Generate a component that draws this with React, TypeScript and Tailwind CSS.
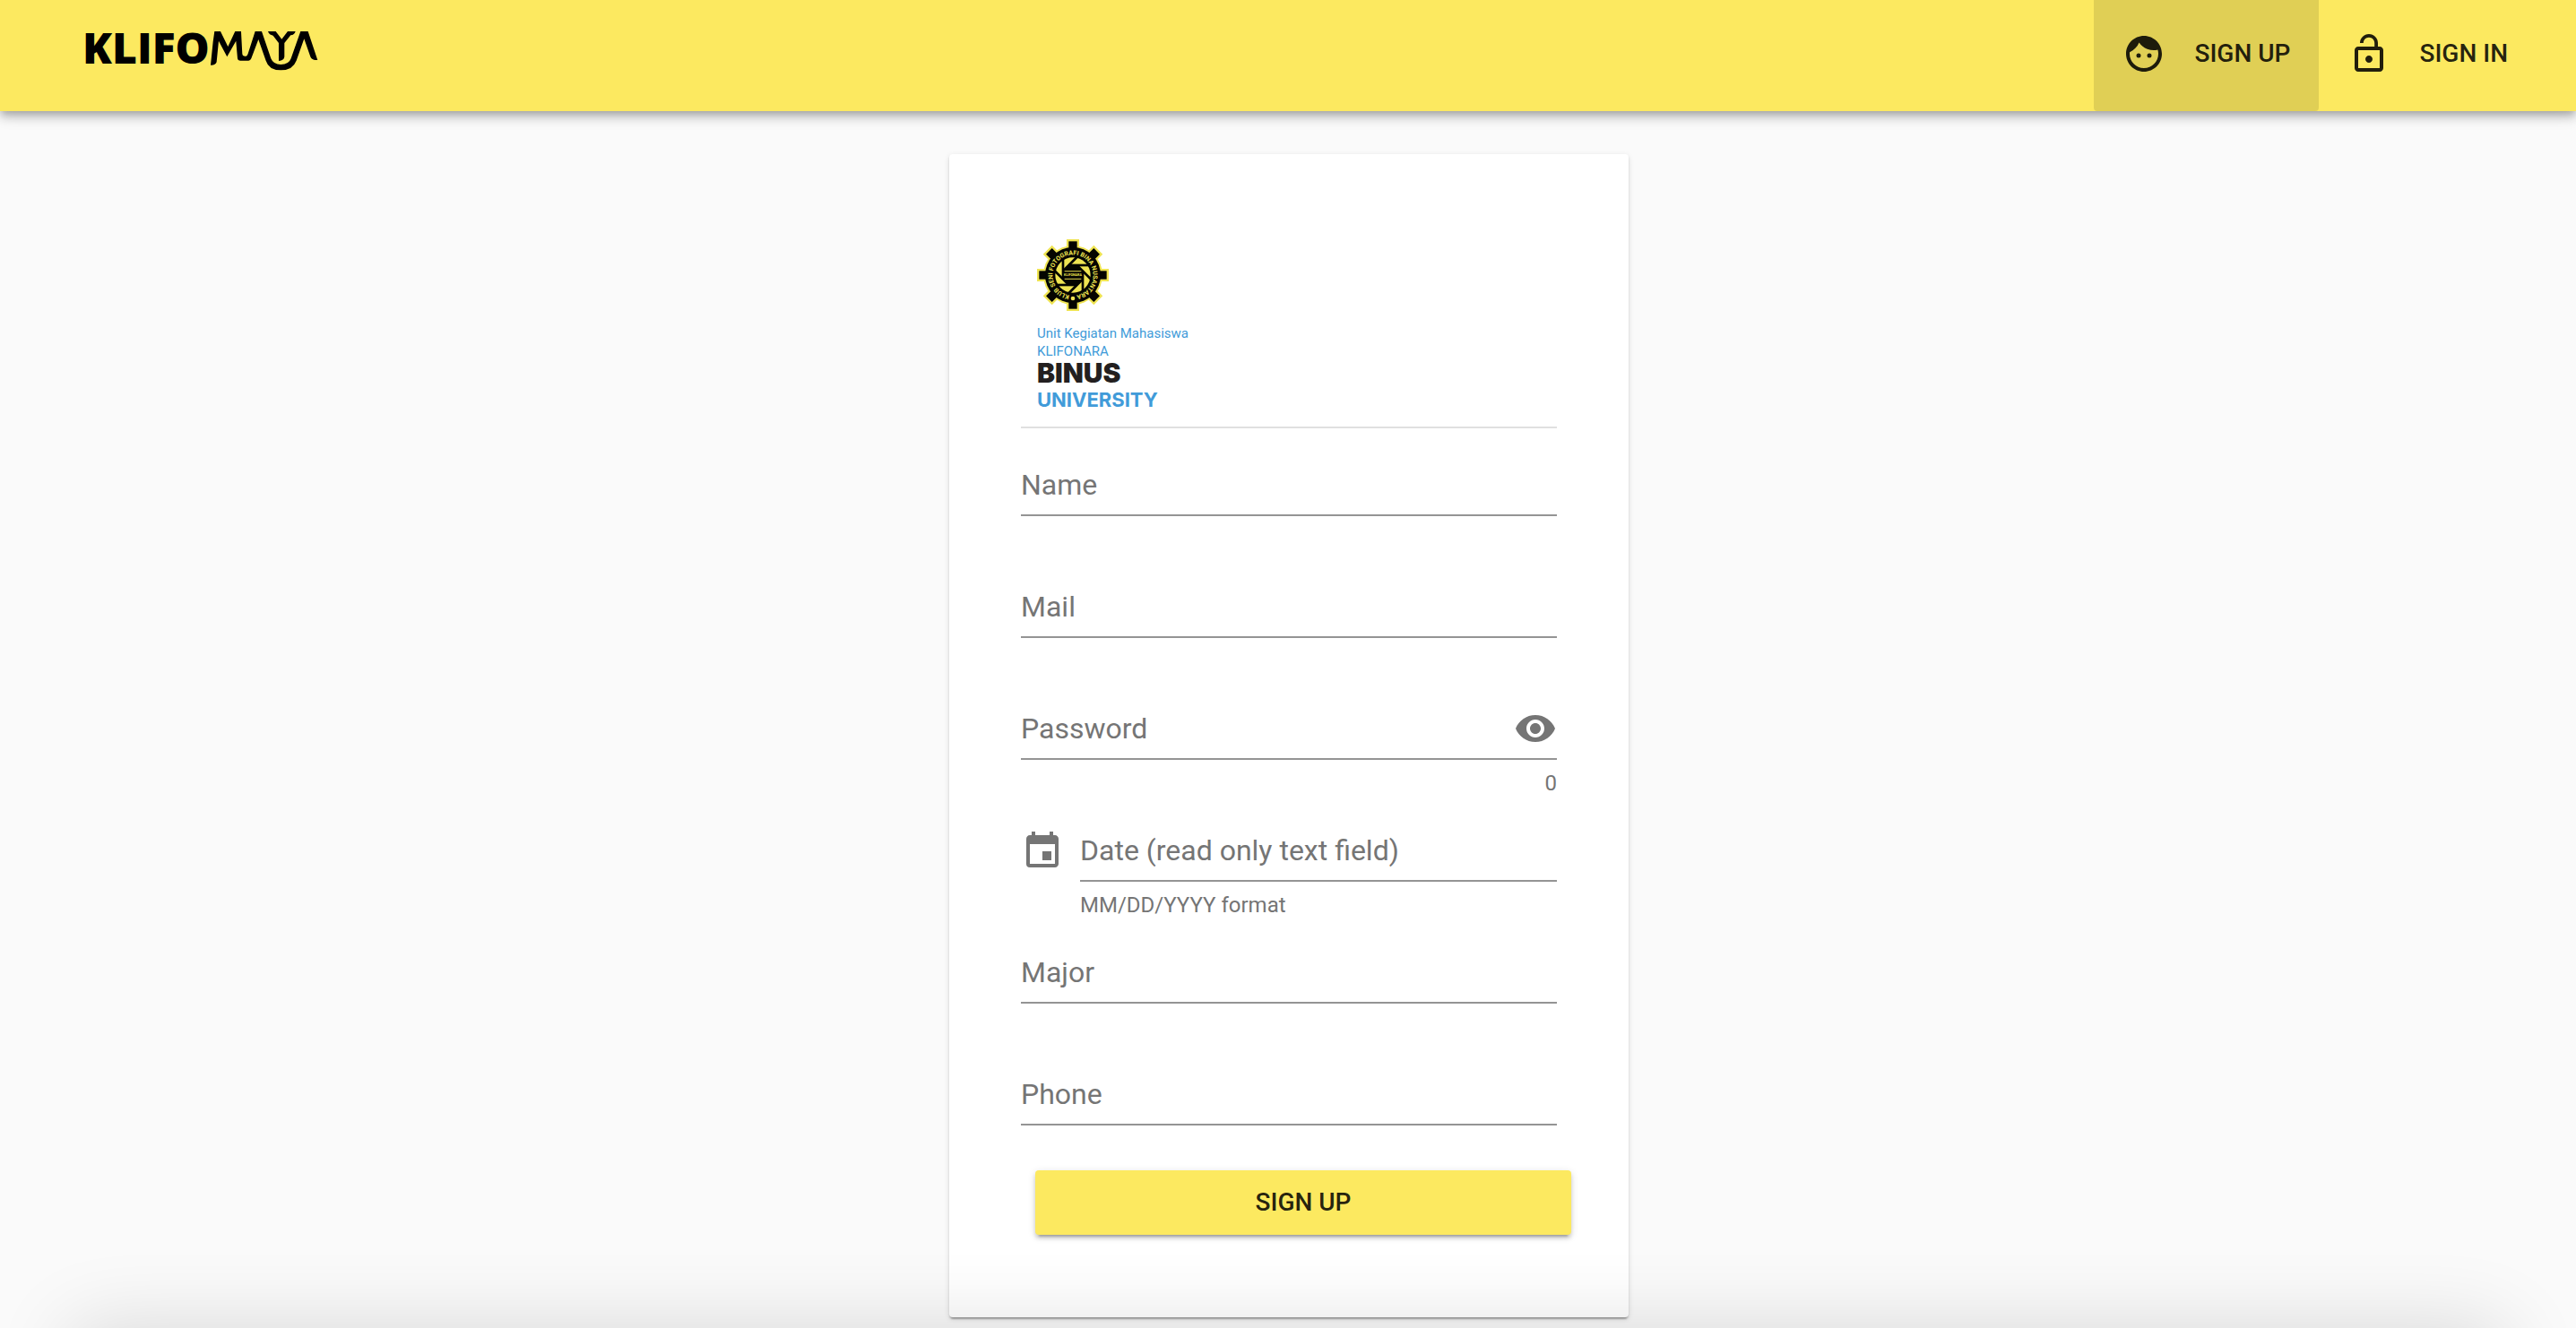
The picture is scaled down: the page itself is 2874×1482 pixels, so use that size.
import { useState, type ReactNode } from "react";
import { MdEvent, MdFace, MdLockOpen, MdVisibility, MdVisibilityOff } from "react-icons/md";

const SPOKES = [0, 45, 90, 135, 180, 225, 270, 315];

function Wordmark() {
  return (
    <svg viewBox="0 -20 272 77" className="h-[77px] w-[272px]" role="img" aria-label="Klifomaya">
      <text x="0" y="37" className="font-['Open_Sans',sans-serif] text-[48px] font-extrabold">
        KLIFO
      </text>
      <g transform="translate(-31 -34) scale(0.3333)">
        <path d="M535 105H555L580 156L604 105H624L628 180Q629 188 637 188H641Q645 187 647 180L671 105H693L724 196Q732 216 757 216Q784 216 791 196L823 105H848L880 201H871Q860 200 856 190L835 130L809 203Q797 235 757 235Q717 235 707 203L682 132L658 196Q655 203 649 203H622Q613 203 612 195L607 137L577 190L549 137L542 208Q538 219 522 218L530 140Z" />
        <path d="M714 105H740L760 131L780 105H806Q803 117 790 118L769 144V190Q768 203 750 204V144L731 119Q718 117 714 105Z" />
      </g>
    </svg>
  );
}

function GearEmblem() {
  return (
    <svg viewBox="-120 -120 240 240" className="size-20" role="img" aria-label="Klub Seni Fotografi Bina Nusantara">
      <defs>
        <path id="ring" d="M0 68A68 68 0 0 1 0 -68A68 68 0 0 1 0 68" />
      </defs>
      <g fill="#efe452">
        {SPOKES.map((a) => (
          <rect key={a} x="-21" y="-120" width="42" height="50" transform={`rotate(${a})`} />
        ))}
        <circle r="99" />
      </g>
      <g fill="#050500">
        {SPOKES.map((a) => (
          <rect key={a} x="-14" y="-113" width="28" height="50" transform={`rotate(${a})`} />
        ))}
        <circle r="93" />
      </g>
      <circle r="59" fill="#efe452" />
      <g fill="none" stroke="#050500" strokeWidth="8">
        {SPOKES.map((a) => (
          <path key={a} d="M-14 -33H54" transform={`rotate(${a})`} />
        ))}
      </g>
      <path d="M-14 -34H14L34 -14V14L14 34H-14L-34 14V-14Z" fill="#050500" />
      <path d="M-28 -13H28M-28 13H28" stroke="#b5ad3e" strokeWidth="4" />
      <text y="4" textAnchor="middle" fill="#efe452" className="font-['Roboto',sans-serif] text-[11px] font-bold">
        KLIFONARA
      </text>
      <circle cy="78" r="7" fill="#efe452" />
      <text fill="#efe452" className="font-['Roboto',sans-serif] text-[21px] font-bold">
        <textPath href="#ring" startOffset="50%" textAnchor="middle">
          KLUB SENI FOTOGRAFI BINA NUSANTARA
        </textPath>
      </text>
    </svg>
  );
}

function BinusLogo() {
  return (
    <div className="flex flex-col items-start pl-[18px]">
      <GearEmblem />
      <p className="mt-[15px] text-[15px] leading-5 text-[#419bd9]">
        Unit Kegiatan Mahasiswa
        <br />
        KLIFONARA
      </p>
      <p className="font-['Inter',sans-serif] text-[30px] leading-7 font-black text-[#231f20]">BINUS</p>
      <p className="font-['Inter',sans-serif] text-[22px] leading-8 font-bold text-[#419bd9]">UNIVERSITY</p>
    </div>
  );
}

type FieldProps = {
  id: string;
  label: string;
  type?: string;
  readOnly?: boolean;
  prepend?: ReactNode;
  append?: ReactNode;
  hint?: string;
  counter?: boolean;
};

function Field({ id, label, type = "text", readOnly, prepend, append, hint, counter }: FieldProps) {
  const [value, setValue] = useState("");
  return (
    <div className="flex gap-[18px]">
      {prepend}
      <div className="min-w-0 flex-1">
        <div className="relative flex h-[68px] items-center border-b-2 border-[#949494] focus-within:border-black">
          <input
            id={id}
            type={type}
            value={value}
            readOnly={readOnly}
            onChange={(e) => setValue(e.target.value)}
            className="h-full min-w-0 flex-1 bg-transparent text-[32px] text-black/87 outline-none"
          />
          {value === "" && (
            <label htmlFor={id} className="pointer-events-none absolute inset-y-0 left-0 flex items-center text-[32px]">
              {label}
            </label>
          )}
          {append}
        </div>
        <div className="flex h-[68px] justify-between pt-[14px] text-2xl leading-6">
          <span>{hint}</span>
          {counter && <span>{value.length}</span>}
        </div>
      </div>
    </div>
  );
}

export default function App() {
  const [visible, setVisible] = useState(false);
  return (
    <div className="min-h-screen bg-[#fafafa] font-['Roboto',sans-serif] text-[#757575]">
      <header className="relative flex h-[124px] items-stretch justify-between bg-[#fce960] pr-11 pl-[92px] text-black/87 shadow-[0_4px_8px_-2px_rgba(0,0,0,0.2),0_8px_10px_rgba(0,0,0,0.14),0_2px_20px_rgba(0,0,0,0.12)]">
        <a href="#home" className="self-start pt-[14px] text-black">
          <Wordmark />
        </a>
        <nav className="flex text-[28px] font-medium">
          <a href="#signup" aria-current="page" className="flex items-center gap-8 rounded-b bg-black/11 px-8 pb-1">
            <MdFace className="size-12" />
            SIGN UP
          </a>
          <a href="#signin" className="flex items-center gap-8 px-8 pb-1">
            <MdLockOpen className="size-12" />
            SIGN IN
          </a>
        </nav>
      </header>

      <main className="pt-12 pr-6 pb-3 pl-[26px]">
        <form
          onSubmit={(e) => e.preventDefault()}
          className="mx-auto max-w-[758px] rounded bg-white px-20 pt-[95px] pb-[92px] shadow-[0_4px_2px_-2px_rgba(0,0,0,0.2),0_2px_2px_rgba(0,0,0,0.14),0_2px_6px_rgba(0,0,0,0.12)]"
        >
          <BinusLogo />
          <hr className="mt-[14px] mb-[30px] border-t-2 border-[#e0e0e0]" />
          <Field id="name" label="Name" />
          <Field id="mail" label="Mail" type="email" />
          <Field
            id="password"
            label="Password"
            type={visible ? "text" : "password"}
            counter
            append={
              <button type="button" aria-label="Toggle password visibility" onClick={() => setVisible(!visible)}>
                {visible ? <MdVisibilityOff className="size-12" /> : <MdVisibility className="size-12" />}
              </button>
            }
          />
          <Field
            id="date"
            label="Date (read only text field)"
            readOnly
            hint="MM/DD/YYYY format"
            prepend={<MdEvent className="mt-[10px] size-12 shrink-0" />}
          />
          <Field id="major" label="Major" />
          <Field id="phone" label="Phone" type="tel" />
          <button
            type="submit"
            className="-mt-[18px] ml-4 flex h-[72px] w-full items-center justify-center rounded bg-[#fce960] text-[28px] font-medium text-black/87 shadow-[0_6px_2px_-4px_rgba(0,0,0,0.2),0_4px_4px_rgba(0,0,0,0.14),0_2px_10px_rgba(0,0,0,0.12)]"
          >
            SIGN UP
          </button>
        </form>
      </main>

      <div className="pointer-events-none fixed inset-x-20 top-full h-40 shadow-[0_0_90px_rgba(0,0,0,0.14)]" />
    </div>
  );
}
